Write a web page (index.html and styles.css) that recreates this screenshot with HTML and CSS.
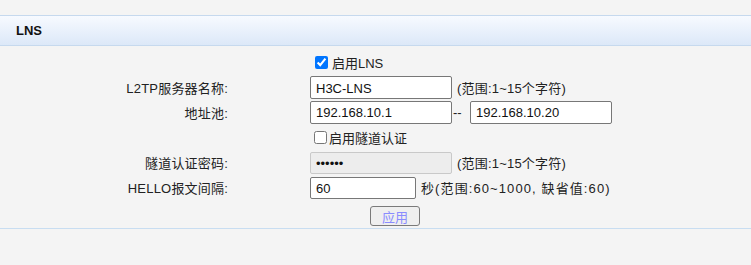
FILE: index.html
```html
<!DOCTYPE html>
<html lang="zh-CN">
<head>
    <meta charset="UTF-8">
    <meta name="viewport" content="width=device-width, initial-scale=1.0">
    <title>LNS</title>
    <link rel="stylesheet" href="styles.css">
</head>
<body>

<div class="panel">
    <div class="panel-title">LNS</div>

    <form class="lns-form" onsubmit="return false;">
        <div class="label"></div>
        <div class="field">
            <label class="check"><input type="checkbox" checked> 启用LNS</label>
        </div>

        <div class="label">L2TP服务器名称:</div>
        <div class="field">
            <input type="text" class="text-input" value="H3C-LNS">
            <span class="hint">(范围:1~15个字符)</span>
        </div>

        <div class="label">地址池:</div>
        <div class="field">
            <input type="text" class="text-input" value="192.168.10.1"><span class="dash">--</span><input type="text" class="text-input" value="192.168.10.20">
        </div>

        <div class="label"></div>
        <div class="field">
            <label class="check tight"><input type="checkbox">启用隧道认证</label>
        </div>

        <div class="label">隧道认证密码:</div>
        <div class="field">
            <input type="password" class="text-input" value="123456" disabled>
            <span class="hint">(范围:1~15个字符)</span>
        </div>

        <div class="label">HELLO报文间隔:</div>
        <div class="field">
            <input type="text" class="text-input short" value="60">
            <span class="hint wide">秒(范围:60~1000, 缺省值:60)</span>
        </div>

        <div class="label"></div>
        <div class="field">
            <button class="apply" disabled>应用</button>
        </div>
    </form>
</div>

</body>
</html>
```

FILE: styles.css
```css
body {
    margin: 0;
    padding-top: 15px;
    background-color: #f4f4f4;
    font-family: "Liberation Sans", Arial, "Noto Sans CJK SC", sans-serif;
    font-size: 13px;
    color: #222;
}

.panel-title {
    height: 29px;
    line-height: 29px;
    padding-left: 16px;
    font-weight: bold;
    color: #111;
    background: linear-gradient(to bottom, #f7faff, #dce8f8);
    border-top: 1px solid #c6d9ee;
    border-bottom: 1px solid #c6d9ee;
}

.lns-form {
    display: grid;
    grid-template-columns: 228px auto;
    grid-template-rows: 25px 25px 24px 26px 25px 25px 28px;
    column-gap: 82px;
    padding-top: 4px;
    border-bottom: 1px solid #c8ddf1;
}

.lns-form .label {
    display: flex;
    align-items: center;
    justify-content: flex-end;
    letter-spacing: 0.2px;
}

.lns-form .field {
    display: flex;
    align-items: center;
}

.check {
    display: flex;
    align-items: center;
}

.check input {
    width: 13px;
    height: 13px;
    margin: 0 4px 0 5px;
}

.check.tight input {
    margin: 0 2px 0 4px;
}

.text-input {
    box-sizing: border-box;
    width: 142px;
    height: 23px;
    margin: 0;
    padding: 1px 5px 0;
    font-family: "Liberation Sans", Arial, "Noto Sans CJK SC", sans-serif;
    font-size: 13px;
    color: #111;
    background-color: #fff;
    border: 1px solid #777;
    border-radius: 2px;
}

.text-input:disabled {
    height: 22px;
    background-color: #ededed;
    border-color: #c9c9c9;
}

.text-input.short {
    width: 106px;
    height: 22px;
}

.hint {
    margin-left: 5px;
    letter-spacing: 0.2px;
}

.hint.wide {
    letter-spacing: 1.1px;
}

.dash {
    width: 17px;
    padding-left: 1px;
}

.apply {
    width: 50px;
    height: 20px;
    margin: 3px 0 0 60px;
    padding: 0;
    font-family: "Noto Sans CJK SC", sans-serif;
    font-size: 13px;
    color: #8a8cff;
    background-color: #efefef;
    border: 1px solid #7a7a7a;
    border-radius: 3px;
}
```
